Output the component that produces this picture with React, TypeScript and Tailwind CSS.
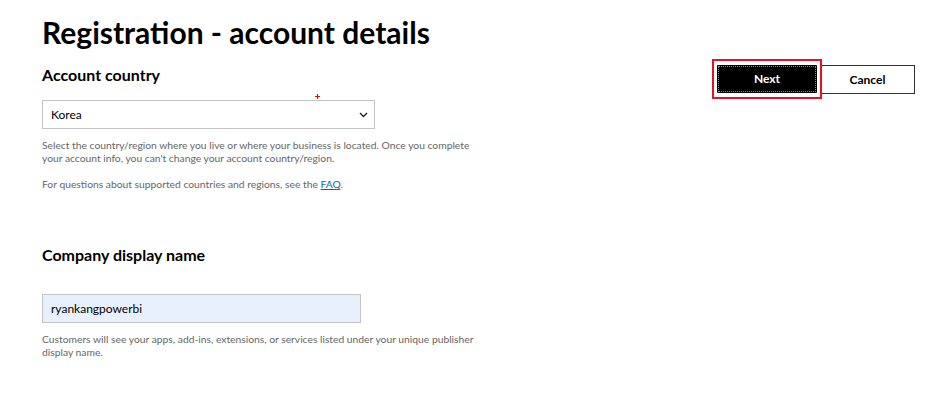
import React, { useState } from "react";

const FONT = { fontFamily: 'Lato, "Noto Sans CJK KR", sans-serif' };

export default function App() {
  const [country, setCountry] = useState("Korea");
  const [displayName, setDisplayName] = useState("ryankangpowerbi");

  return (
    <div style={FONT} className="w-[936px] h-[397px] bg-white text-black overflow-hidden">
      <div className="flex pl-[42px] pr-[21px]">
        {/* left column */}
        <div className="flex-1">
          <h1 className="text-[30px] leading-[36px] font-bold pt-[14px]">
            Registration - account details
          </h1>

          <h2 className="mt-[15px] text-[16px] leading-[20px] font-bold">Account country</h2>

          <div className="relative mt-[15px] w-[333px]">
            {/* little red marker above the select */}
            <svg className="absolute left-[273px] top-[-6px]" width="5" height="5" viewBox="0 0 5 5" shapeRendering="crispEdges">
              <path d="M2.5 0v5M0 2.5h5" stroke="#ff0000" strokeWidth="1" />
            </svg>
            <div className="h-[29px] border border-[#c4c4c4] flex items-center justify-between pl-[8px] pr-[6px]">
              <span className="text-[12px]">{country}</span>
              <svg width="9" height="6" viewBox="0 0 9 6" fill="none">
                <path d="M1 1l3.5 3.5L8 1" stroke="#222" strokeWidth="1.4" />
              </svg>
            </div>
          </div>

          <p className="mt-[10px] text-[10.3px] leading-[13px] text-[#666]">
            Select the country/region where you live or where your business is located. Once you complete
            <br />
            your account info, you can't change your account country/region.
          </p>
          <p className="mt-[13px] text-[10.3px] leading-[13px] text-[#666]">
            For questions about supported countries and regions, see the{" "}
            <a href="#" onClick={() => setCountry("Korea")} className="text-[#0067b8] underline">FAQ</a>.
          </p>

          <h2 className="mt-[54px] text-[16px] leading-[20px] font-bold">Company display name</h2>

          <input
            value={displayName}
            onChange={(e) => setDisplayName(e.target.value)}
            className="block mt-[29px] w-[319px] h-[29px] border border-[#c4c4c4] bg-[#e8f0fe] pl-[8px] text-[12px] outline-none"
          />

          <p className="mt-[10px] text-[10.3px] leading-[13px] text-[#666]">
            Customers will see your apps, add-ins, extensions, or services listed under your unique publisher
            <br />
            display name.
          </p>
        </div>

        {/* actions */}
        <div className="pt-[59px] flex items-start">
          <div className="border-2 border-[#e81123] px-[3px] py-[4px] relative z-10">
            <button className="block w-[100px] h-[28px] bg-black text-white text-[12px] font-bold outline-1 outline-dotted outline-[#888] outline-offset-[-2px] rounded-[1px]">
              Next
            </button>
          </div>
          <button className="-ml-[2px] mt-[6px] w-[95px] h-[29px] bg-white border-[1.5px] border-[#333] text-[12px] font-bold">
            Cancel
          </button>
        </div>
      </div>
    </div>
  );
}
